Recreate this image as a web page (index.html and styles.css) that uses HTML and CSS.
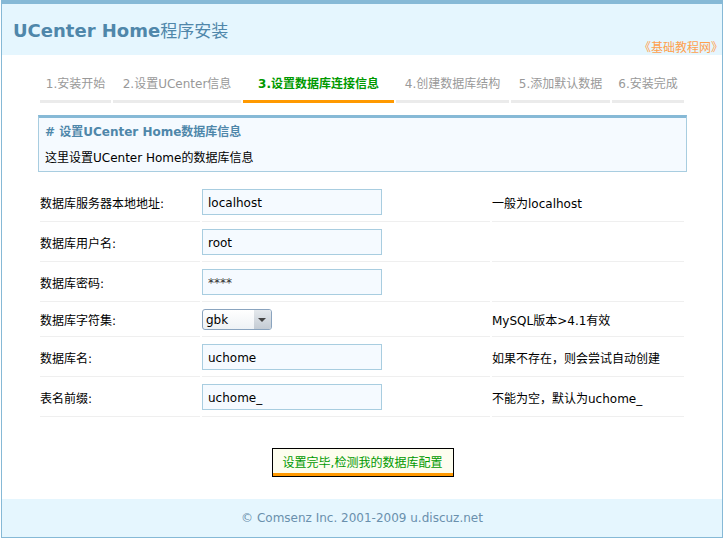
FILE: index.html
```html
<!DOCTYPE html>
<html lang="zh-CN">
<head>
    <meta charset="UTF-8">
    <title>UCenter Home程序安装</title>
    <link rel="stylesheet" href="styles.css">
</head>
<body>
    <div class="wrap">
        <div class="header">
            <h1 class="title"><b>UCenter Home</b>程序安装</h1>
            <a class="source" href="#">《基础教程网》</a>
        </div>

        <div class="main">
            <ul class="steps">
                <li class="s1">1.安装开始</li>
                <li class="s2">2.设置UCenter信息</li>
                <li class="s3 current">3.设置数据库连接信息</li>
                <li class="s4">4.创建数据库结构</li>
                <li class="s5">5.添加默认数据</li>
                <li class="s6">6.安装完成</li>
            </ul>

            <div class="msgbox">
                <h4># 设置UCenter Home数据库信息</h4>
                <p>这里设置UCenter Home的数据库信息</p>
            </div>

            <table class="formtable">
                <tr>
                    <td class="label">数据库服务器本地地址:</td>
                    <td><input type="text" class="t_input" value="localhost"></td>
                    <td class="note">一般为localhost</td>
                </tr>
                <tr>
                    <td class="label">数据库用户名:</td>
                    <td><input type="text" class="t_input" value="root"></td>
                    <td class="note"></td>
                </tr>
                <tr>
                    <td class="label">数据库密码:</td>
                    <td><input type="text" class="t_input pass" value="****"></td>
                    <td class="note"></td>
                </tr>
                <tr>
                    <td class="label">数据库字符集:</td>
                    <td>
                        <span class="select-wrap">
                            <select class="t_select">
                                <option>gbk</option>
                                <option>utf8</option>
                            </select>
                        </span>
                    </td>
                    <td class="note">MySQL版本&gt;4.1有效</td>
                </tr>
                <tr>
                    <td class="label">数据库名:</td>
                    <td><input type="text" class="t_input" value="uchome"></td>
                    <td class="note">如果不存在，则会尝试自动创建</td>
                </tr>
                <tr>
                    <td class="label">表名前缀:</td>
                    <td><input type="text" class="t_input" value="uchome_"></td>
                    <td class="note">不能为空，默认为uchome_</td>
                </tr>
            </table>

            <div class="submit-row">
                <button class="submit" type="button">设置完毕,检测我的数据库配置</button>
            </div>
        </div>

        <div class="footer">© Comsenz Inc. 2001-2009 u.discuz.net</div>
    </div>
</body>
</html>
```

FILE: styles.css
```css
* {
    margin: 0;
    padding: 0;
    box-sizing: border-box;
}

body {
    background: #fff;
    font-family: "DejaVu Sans", "Noto Sans CJK SC", sans-serif;
    font-size: 12px;
    color: #000;
}

.wrap {
    margin: 0 1px;
    height: 538px;
    border: 1px solid #86b9d6;
    border-top: 4px solid #86b9d6;
    display: flex;
    flex-direction: column;
}

.header {
    height: 51px;
    background: #e5f6fe;
    display: flex;
    justify-content: space-between;
    padding-left: 11px;
}

.title {
    font-size: 17px;
    font-weight: normal;
    color: #4f87aa;
    line-height: 24px;
    margin-top: 15px;
}

.title b {
    font-size: 18px;
}

.source {
    align-self: flex-end;
    color: #ffa04d;
    text-decoration: none;
    font-size: 12px;
    line-height: 14px;
    margin-right: -1px;
}

.main {
    flex: 1;
    padding: 0 35px 0 36px;
}

.steps {
    list-style: none;
    display: flex;
    gap: 2px;
    margin: 17px 2px 0;
}

.steps li {
    line-height: 22px;
    padding-top: 1px;
    padding-bottom: 5px;
    border-bottom: 3px solid #ebebeb;
    color: #999;
    text-align: center;
}

.steps .s1 { width: 71px; }
.steps .s2 { width: 128px; }
.steps .s3 { width: 151px; }
.steps .s4 { width: 113px; }
.steps .s5 { width: 99px; }
.steps .s6 { width: 72px; }

.steps .current {
    color: #009900;
    font-weight: bold;
    border-bottom-color: #ff9900;
}

.msgbox {
    margin-top: 12px;
    background: #f5faff;
    border: 1px solid #a8cde0;
    border-top: 3px solid #86b9d6;
    padding: 6px 6px 5px;
}

.msgbox h4 {
    color: #4f87aa;
    font-size: 12px;
    line-height: 16px;
}

.msgbox p {
    margin-top: 10px;
    line-height: 16px;
}

.formtable {
    margin-top: 10px;
    width: 648px;
    border-collapse: separate;
    border-spacing: 2px 0;
}

.formtable td {
    padding: 7px 0 6px;
    border-bottom: 1px solid #efefef;
    vertical-align: middle;
}

.formtable .label {
    width: 160px;
}

.formtable td:nth-child(2) {
    width: 288px;
}

.t_input {
    width: 180px;
    height: 26px;
    border: 1px solid #a8cde0;
    background: #f5faff;
    padding: 2px 5px 0;
    font-family: "DejaVu Sans", "Noto Sans CJK SC", sans-serif;
    font-size: 12px;
    color: #000;
    outline: none;
}

.t_input.pass {
    color: #333;
    font-size: 12px;
}

.select-wrap {
    position: relative;
    display: inline-block;
    vertical-align: middle;
}

.t_select {
    appearance: none;
    -webkit-appearance: none;
    width: 70px;
    height: 21px;
    border: 1px solid #8aa4bf;
    border-radius: 3px;
    background: linear-gradient(#ffffff, #eef2f5);
    padding: 0 3px;
    font-family: "DejaVu Sans", "Noto Sans CJK SC", sans-serif;
    font-size: 12px;
    color: #000;
    outline: none;
    display: block;
}

.select-wrap::after {
    content: "";
    position: absolute;
    right: 1px;
    top: 1px;
    width: 17px;
    height: 19px;
    border-radius: 0 2px 2px 0;
    background: linear-gradient(#e4e8ec, #c4ccd4);
    pointer-events: none;
}

.select-wrap::before {
    content: "";
    position: absolute;
    right: 6px;
    top: 9px;
    width: 0;
    height: 0;
    border-top: 4px solid #444;
    border-left: 4px solid transparent;
    border-right: 4px solid transparent;
    z-index: 1;
    pointer-events: none;
}

.submit-row {
    text-align: center;
    margin-top: 31px;
}

.submit {
    width: 182px;
    height: 29px;
    border: 1px solid #000;
    background: #fdfdee;
    box-shadow: inset 0 -3px 0 #ff9900;
    color: #009900;
    font-family: "DejaVu Sans", "Noto Sans CJK SC", sans-serif;
    font-size: 12px;
    padding-bottom: 2px;
    cursor: pointer;
}

.footer {
    height: 38px;
    background: #e5f6fe;
    color: #6a90ad;
    text-align: center;
    line-height: 38px;
    font-size: 12px;
}
```
